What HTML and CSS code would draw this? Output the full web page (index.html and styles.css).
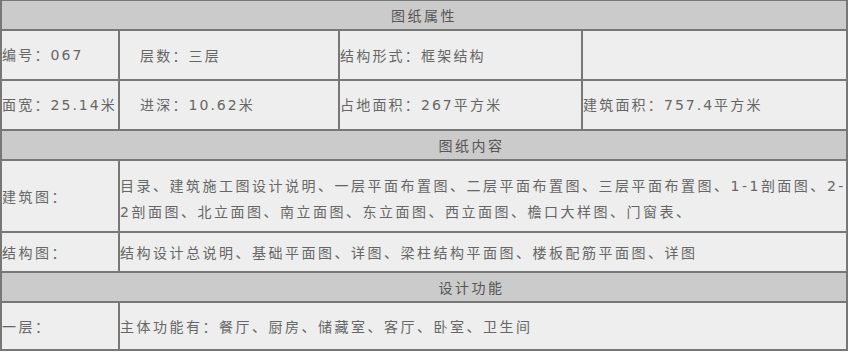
FILE: index.html
```html
<!DOCTYPE html>
<html lang="zh-CN">
<head>
<meta charset="utf-8">
<title>图纸属性</title>
<link rel="stylesheet" href="styles.css">
</head>
<body>
<table class="sheet">
  <colgroup>
    <col class="c1">
    <col class="c2">
    <col class="c3">
    <col class="c4">
  </colgroup>
  <tbody>
    <tr class="head-row">
      <td class="head" colspan="4">图纸属性</td>
    </tr>
    <tr class="prop-row">
      <td>编号：<span class="num">067</span></td>
      <td class="indent">层数：三层</td>
      <td>结构形式：框架结构</td>
      <td></td>
    </tr>
    <tr class="prop-row">
      <td>面宽：<span class="num">25.14</span>米</td>
      <td class="indent">进深：<span class="num">10.62</span>米</td>
      <td>占地面积：<span class="num">267</span>平方米</td>
      <td>建筑面积：<span class="num">757.4</span>平方米</td>
    </tr>
    <tr class="head-row">
      <td class="head head-shift" colspan="4">图纸内容</td>
    </tr>
    <tr class="arch-row">
      <td>建筑图：</td>
      <td class="list" colspan="3">目录、建筑施工图设计说明、一层平面布置图、二层平面布置图、三层平面布置图、<span class="num">1-1</span>剖面图、<span class="num">2-2</span>剖面图、北立面图、南立面图、东立面图、西立面图、檐口大样图、门窗表、</td>
    </tr>
    <tr class="struct-row">
      <td>结构图：</td>
      <td colspan="3">结构设计总说明、基础平面图、详图、梁柱结构平面图、楼板配筋平面图、详图</td>
    </tr>
    <tr class="head-row">
      <td class="head head-shift" colspan="4">设计功能</td>
    </tr>
    <tr class="func-row">
      <td>一层：</td>
      <td colspan="3">主体功能有：餐厅、厨房、储藏室、客厅、卧室、卫生间</td>
    </tr>
  </tbody>
</table>
</body>
</html>
```

FILE: styles.css
```css
html, body {
  margin: 0;
  padding: 0;
  background: #ffffff;
}

.sheet {
  border-collapse: separate;
  border-spacing: 0;
  table-layout: fixed;
  width: 848px;
  border-left: 1px solid #777777;
  border-right: 1px solid #777777;
  border-bottom: 1px solid #777777;
  font-family: "Noto Sans CJK SC", "DejaVu Sans", sans-serif;
  font-size: 14px;
  letter-spacing: 2.5px;
  line-height: 25px;
  color: #666666;
}

.c1 { width: 118px; }
.c2 { width: 220px; }
.c3 { width: 243px; }
.c4 { width: 265px; }

.sheet td {
  box-sizing: border-box;
  border: 1px solid #777777;
  background: #eeeeee;
  padding: 0;
  vertical-align: middle;
  text-align: left;
}

.sheet .prop-row td {
  letter-spacing: 2.2px;
}

.num {
  font-family: "DejaVu Sans", sans-serif;
}

.prop-row .num {
  letter-spacing: 2px;
}

.sheet td.indent { padding-left: 20px; }

.sheet td.list { padding-top: 5px; }

.sheet td.head {
  background: #cbcbcb;
  color: #555555;
  text-align: center;
}

.sheet td.head-shift {
  padding-left: 95px;
}

.head-row td { height: 30px; }
.prop-row td { height: 50px; }
.arch-row td { height: 72px; }
.struct-row td { height: 40px; }
.func-row td { height: 48px; }
```
